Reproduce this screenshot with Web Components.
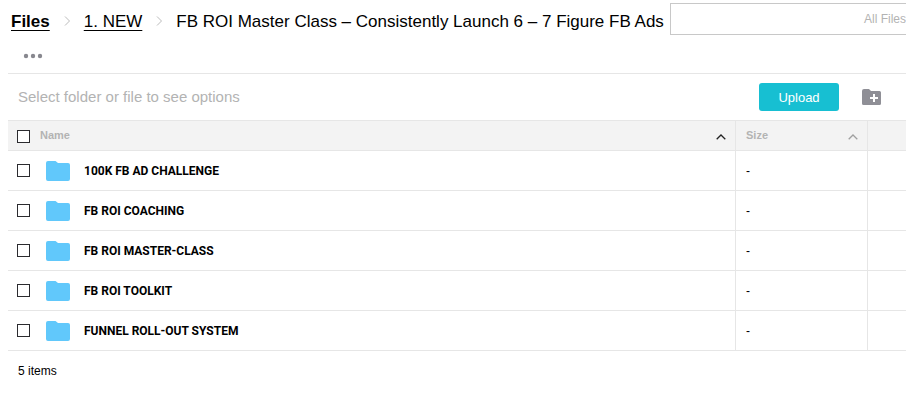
<!DOCTYPE html>
<html lang="en">
<head>
<meta charset="utf-8">
<title>Files</title>
<style>
body { margin: 0; background: #fff; color: #000; font-family: "Liberation Sans", Arial, sans-serif; font-size: 12px; overflow-x: hidden; }
</style>
</head>
<body>
<file-browser></file-browser>

<template id="crumb-trail">
<style>
:host { display: block; font-size: 17px; line-height: 20px; white-space: nowrap; }
nav { display: flex; align-items: center; }
::slotted(a) { color: #000; text-decoration: underline; text-underline-offset: 3px; text-decoration-thickness: 1px; text-decoration-skip-ink: none; }
::slotted(a[data-root]) { font-weight: bold; }
svg { width: 34px; height: 20px; flex: none; }
</style>
<nav aria-label="Breadcrumb">
<slot name="root"></slot>
<svg viewBox="0 0 34 20"><path d="M15 4.500l4.500 4.500-4.500 4.500" fill="none" stroke="#bcbcbc"/></svg>
<slot name="parent"></slot>
<svg viewBox="0 0 34 20"><path d="M15 4.500l4.500 4.500-4.500 4.500" fill="none" stroke="#bcbcbc"/></svg>
<slot></slot>
</nav>
</template>

<template id="search-field">
<style>
:host { display: flex; box-sizing: border-box; height: 32px; border: 1px solid #c8c8c8; border-right: 0; min-width: 0; }
input { flex: 1; min-width: 0; border: 0; padding: 0 8px; background: none; font: inherit; outline: 0; }
button { border: 0; padding: 0; background: none; font: inherit; color: #b3b3b3; white-space: nowrap; }
</style>
<input type="text" aria-label="Search files"><button type="button"><slot></slot></button>
</template>

<template id="tool-bar">
<style>
:host { display: flex; align-items: center; height: 46px; padding: 0 25px 0 10px; border-top: 1px solid #e6e6e6; }
.hint { flex: 1; font-size: 15px; line-height: 18px; color: #b3b3b3; }
.upload { width: 80px; height: 28px; border: 0; border-radius: 3px; padding: 0; background: #17bfd2; color: #fff; font: inherit; font-size: 13px; }
.add { display: flex; margin-left: 23px; border: 0; padding: 0; background: none; }
svg { width: 19px; height: 16px; }
</style>
<span class="hint"><slot></slot></span>
<button class="upload" type="button">Upload</button>
<button class="add" type="button" aria-label="New folder"><svg viewBox="0 0 19 16"><path fill-rule="evenodd" fill="#8f8f96" d="M2 0h5l2 2h8.500q1.500 0 1.500 1.500v11q0 1.500-1.500 1.500H1.500Q0 16 0 14.500V2Q0 0 2 0zM11 5v3H8v2h3v3h2v-3h3V8h-3V5z"/></svg></button>
</template>

<template id="check-box">
<style>
:host { display: block; width: 13px; height: 13px; }
input { appearance: none; display: block; box-sizing: border-box; width: 13px; height: 13px; margin: 0; border: 1px solid #2b2b2f; background: #fff; }
input:checked { background: #17bfd2; }
</style>
<input type="checkbox">
</template>

<template id="folder-icon">
<style>:host, svg { display: block; width: 24px; height: 20px; }</style>
<svg viewBox="0 0 24 20"><path fill="#61c8fb" d="M2 0h7.500L12 2h10q2 0 2 2v14q0 2-2 2H2q-2 0-2-2V2Q0 0 2 0z"/></svg>
</template>

<template id="sort-arrow">
<style>:host, svg { display: block; width: 10px; height: 6px; }</style>
<svg viewBox="0 0 10 6"><path d="M.7 5.300L5 1l4.300 4.300" fill="none" stroke="currentColor" stroke-width="1.300"/></svg>
</template>

<template id="file-table">
<style>
:host { display: block; }
table { width: 100%; table-layout: fixed; border-collapse: separate; border-spacing: 0; }
.size { width: 132px; } .rest { width: 38px; }
th, td { box-sizing: border-box; padding: 0 10px; text-align: left; border-bottom: 1px solid #e6e6e6; }
th { height: 31px; border-top: 1px solid #e6e6e6; background: #f3f3f3; color: #b3b3b3; font-size: 11px; }
td { height: 40px; font-size: 12px; }
th:not(:last-child), td:not(:last-child) { border-right: 1px solid #e6e6e6; }
.cell { display: flex; align-items: center; }
.cell span { flex: 1; line-height: 14px; }
th .cell { height: 29px; }
th .cell span { padding-bottom: 2px; }
th sort-arrow { color: #a0a0a0; margin: 3px -1px 0 0; }
th sort-arrow.active { color: #222; }
check-box { margin-right: 10px; }
th check-box { margin-top: 2px; }
td check-box { margin-right: 16px; }
folder-icon { margin-right: 14px; }
td .cell span { font-family: Roboto, "Liberation Sans", sans-serif; font-weight: bold; }
td:first-child, th:first-child { padding-left: 9px; }
</style>
<table>
<colgroup><col><col class="size"><col class="rest"></colgroup>
<thead><tr>
<th><div class="cell"><check-box label="Select all"></check-box><span>Name</span><sort-arrow class="active"></sort-arrow></div></th>
<th><div class="cell"><span>Size</span><sort-arrow></sort-arrow></div></th>
<th></th>
</tr></thead>
<tbody></tbody>
</table>
</template>

<template id="file-browser">
<style>
:host { display: block; padding-left: 8px; }
header { display: grid; grid-template-columns: auto 1fr; grid-template-rows: 32px auto; column-gap: 6px; padding: 3px 0 12px; }
crumb-trail { padding: 9px 0 0 3px; }
.more { grid-column: 1; justify-self: start; margin: 17px 0 1px 15px; display: flex; border: 0; padding: 0; background: none; }
.more svg { width: 20px; height: 8px; }
footer { padding: 12px 10px; line-height: 16px; }
</style>
<header>
<crumb-trail><a slot="root" data-root href="#files">Files</a><a slot="parent" href="#new">1. NEW</a><span>FB ROI Master Class – Consistently Launch 6 – 7 Figure FB Ads</span></crumb-trail>
<search-field>All Files</search-field>
<button class="more" type="button" aria-label="More"><svg viewBox="0 0 20 8" fill="#88888f"><circle cx="3" cy="4" r="2.200"/><circle cx="10" cy="4" r="2.200"/><circle cx="17" cy="4" r="2.200"/></svg></button>
</header>
<tool-bar>Select folder or file to see options</tool-bar>
<file-table></file-table>
<footer>5 items</footer>
</template>

<script>
class Part extends HTMLElement {
  constructor() {
    super();
    this.attachShadow({ mode: "open" }).append(document.getElementById(this.localName).content.cloneNode(true));
  }
}
for (const name of ["crumb-trail", "search-field", "tool-bar", "folder-icon", "sort-arrow"]) {
  customElements.define(name, class extends Part {});
}
customElements.define("check-box", class extends Part {
  connectedCallback() {
    this.shadowRoot.querySelector("input").setAttribute("aria-label", this.getAttribute("label"));
  }
});
const folders = ["100K FB AD CHALLENGE", "FB ROI COACHING", "FB ROI MASTER-CLASS", "FB ROI TOOLKIT", "FUNNEL ROLL-OUT SYSTEM"];
customElements.define("file-table", class extends Part {
  connectedCallback() {
    this.shadowRoot.querySelector("tbody").innerHTML = folders.map(name =>
      `<tr><td><div class="cell"><check-box label="Select ${name}"></check-box><folder-icon></folder-icon><span>${name}</span></div></td><td>-</td><td></td></tr>`).join("");
  }
});
customElements.define("file-browser", class extends Part {});
</script>
</body>
</html>
